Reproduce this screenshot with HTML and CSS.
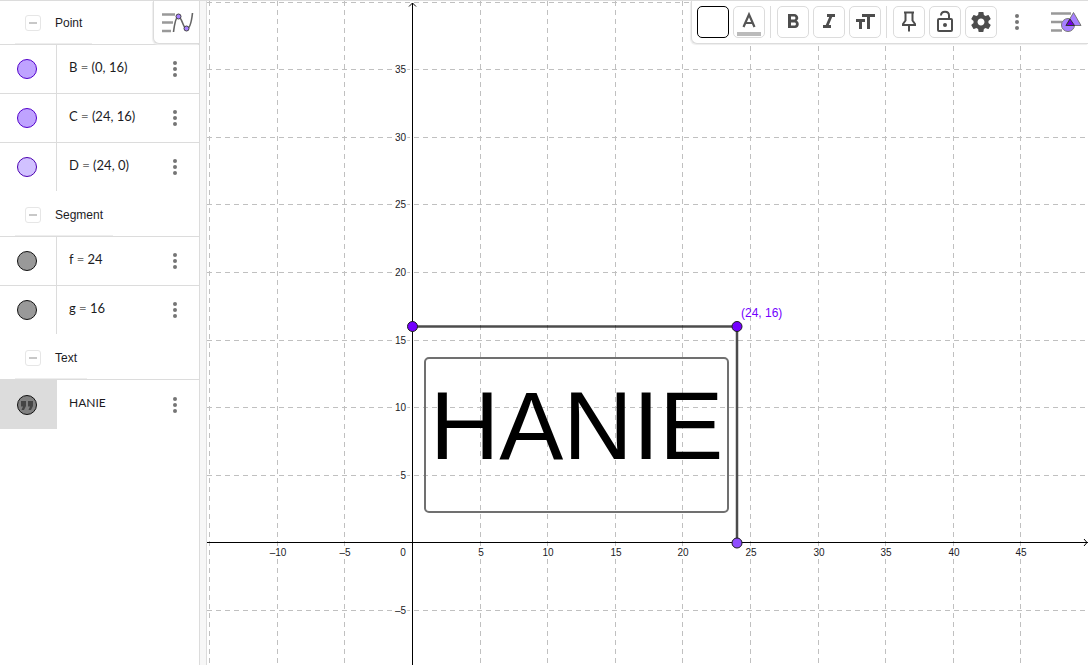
FILE: index.html
```html
<!DOCTYPE html>
<html lang="en">
<head>
<meta charset="utf-8">
<title>GeoGebra Classic</title>
<link rel="stylesheet" href="styles.css">
</head>
<body>
<svg class="defs" aria-hidden="true">
  <symbol id="dots" viewBox="0 0 24 24"><circle cx="12" cy="6" r="2"/><circle cx="12" cy="12" r="2"/><circle cx="12" cy="18" r="2"/></symbol>
</svg>
<div class="app">
  <aside class="algebra">
    <button class="algebra-style" aria-label="Algebra style bar">
      <svg width="32" height="24" viewBox="0 0 32 24"><path d="M0 4.500h13M0 12.500h11M0 21h9" stroke="#999" stroke-width="2.500"/><path d="M11.500 22C12.500 14 14 6.500 16.500 6.500C19.500 6.500 21.500 19 24.500 19C28 19 29.500 12 30.500 3" fill="none" stroke="#666" stroke-width="1.600"/><circle cx="16.500" cy="6.500" r="2.500" fill="#a67fff" stroke="#444"/><circle cx="24.500" cy="18.500" r="2.500" fill="#a67fff" stroke="#444"/></svg>
    </button>
    <section>
      <h2 class="group"><span class="group-label"><button class="collapse" aria-label="Collapse Point"></button>Point</span></h2>
      <ul class="rows">
        <li class="row"><span class="cell"><button class="marble point" aria-label="Show B"></button></span><span class="value">B <i>=</i> (0, 16)</span><button class="more" aria-label="More for B"><svg width="24" height="24"><use href="#dots"/></svg></button></li>
        <li class="row"><span class="cell"><button class="marble point" aria-label="Show C"></button></span><span class="value">C <i>=</i> (24, 16)</span><button class="more" aria-label="More for C"><svg width="24" height="24"><use href="#dots"/></svg></button></li>
        <li class="row"><span class="cell"><button class="marble point light" aria-label="Show D"></button></span><span class="value">D <i>=</i> (24, 0)</span><button class="more" aria-label="More for D"><svg width="24" height="24"><use href="#dots"/></svg></button></li>
      </ul>
    </section>
    <section>
      <h2 class="group"><span class="group-label"><button class="collapse" aria-label="Collapse Segment"></button>Segment</span></h2>
      <ul class="rows">
        <li class="row"><span class="cell"><button class="marble" aria-label="Show f"></button></span><span class="value">f <i>=</i> 24</span><button class="more" aria-label="More for f"><svg width="24" height="24"><use href="#dots"/></svg></button></li>
        <li class="row"><span class="cell"><button class="marble" aria-label="Show g"></button></span><span class="value">g <i>=</i> 16</span><button class="more" aria-label="More for g"><svg width="24" height="24"><use href="#dots"/></svg></button></li>
      </ul>
    </section>
    <section>
      <h2 class="group"><span class="group-label"><button class="collapse" aria-label="Collapse Text"></button>Text</span></h2>
      <ul class="rows">
        <li class="row selected"><span class="cell"><button class="marble quote" aria-label="Show text"><svg width="18" height="18" viewBox="0 0 18 18"><path d="M3 5h5v5l-2 4H3.500l1.500-3.500H3zM10 5h5v5l-2 4h-2.500l1.500-3.500H10z" fill="#444"/></svg></button></span><span class="value plain">HANIE</span><button class="more" aria-label="More for text"><svg width="24" height="24"><use href="#dots"/></svg></button></li>
      </ul>
    </section>
  </aside>
  <div class="splitter"></div>
  <main class="graphics">
    <svg class="plot" role="img" aria-label="Graphics view">
      <g transform="translate(-207 0)">
        <path class="grid" d="M209.500 1V2000M277.500 1V2000M344.500 1V2000M480.500 1V2000M547.500 1V2000M615.500 1V2000M682.500 1V2000M750.500 1V2000M818.500 1V2000M885.500 1V2000M953.500 1V2000M1020.500 1V2000"/>
        <path class="grid" d="M207 2.500H4000M207 69.500H4000M207 137.500H4000M207 204.500H4000M207 272.500H4000M207 340.500H4000M207 407.500H4000M207 475.500H4000M207 610.500H4000"/>
        <path class="axis" d="M412.500 3V2000M207 542.500H4000M409 6.500L412.500 3L416 6.500"/>
        <g class="ticks">
          <text x="278" y="556">–10</text><text x="345" y="556">–5</text><text x="403" y="556">0</text><text x="481" y="556">5</text><text x="548" y="556">10</text><text x="616" y="556">15</text><text x="683" y="556">20</text><text x="751" y="556">25</text><text x="819" y="556">30</text><text x="886" y="556">35</text><text x="954" y="556">40</text><text x="1021" y="556">45</text>
        </g>
        <g class="ticks side">
          <text x="406" y="73">35</text><text x="406" y="141">30</text><text x="406" y="208">25</text><text x="406" y="276">20</text><text x="406" y="344">15</text><text x="406" y="411">10</text><text x="406" y="479">5</text><text x="406" y="614">–5</text>
        </g>
        <path class="segment" d="M412.500 326.500H737V543"/>
        <rect class="text-frame" x="425" y="358" width="303" height="154" rx="4"/>
        <text class="big-text" x="430" y="459">HANIE</text>
        <circle class="dot" cx="412.500" cy="326.500" r="5"/>
        <circle class="dot" cx="737" cy="326.500" r="5"/>
        <circle class="dot pale" cx="737" cy="543" r="5"/>
        <text class="point-label" x="741" y="317">(24, 16)</text>
      </g>
      <svg x="100%" y="542" overflow="visible"><path class="axis" d="M-4 -3L-1 0.500L-4 4"/></svg>
    </svg>
    <div class="toolbar" role="toolbar">
      <button class="tool color" aria-label="Background colour"></button>
      <button class="tool" aria-label="Text colour"><svg width="24" height="28" viewBox="0 0 24 28"><path d="M6.500 19L12 6.500L17.500 19M8.500 15h7" fill="none" stroke="#555" stroke-width="2.200"/><path d="M0 24h24v4H0z" fill="#bbb"/></svg></button>
      <span class="divider"></span>
      <button class="tool" aria-label="Bold"><svg width="24" height="24" viewBox="0 0 24 24"><path fill="#4d4d4d" d="M15.600 10.790c.97-.67 1.650-1.770 1.650-2.790 0-2.260-1.750-4-4-4H7v14h7.040c2.090 0 3.710-1.700 3.710-3.790 0-1.520-.86-2.820-2.150-3.420zM10 6.500h3c.83 0 1.500.67 1.500 1.500s-.67 1.500-1.500 1.500h-3v-3zm3.500 9H10v-3h3.500c.83 0 1.500.67 1.500 1.500s-.67 1.500-1.500 1.500z"/></svg></button>
      <button class="tool" aria-label="Italic"><svg width="24" height="24" viewBox="0 0 24 24"><path fill="#4d4d4d" d="M10 4v3h2.210l-3.420 8H6v3h8v-3h-2.210l3.420-8H18V4z"/></svg></button>
      <button class="tool" aria-label="Text size"><svg width="24" height="24" viewBox="0 0 24 24"><path fill="#4d4d4d" d="M9 4v3h5v12h3V7h5V4H9zm-6 8h3v7h3v-7h3V9H3v3z"/></svg></button>
      <span class="divider"></span>
      <button class="tool" aria-label="Pin"><svg width="24" height="24" viewBox="0 0 24 24"><path d="M7 2.500h10M8.500 2.500v8L6 14v1h12v-1L15.500 10.500V2.500M12 15v6.500" fill="none" stroke="#4d4d4d" stroke-width="2"/></svg></button>
      <button class="tool" aria-label="Lock"><svg width="24" height="24" viewBox="0 0 24 24"><rect x="5" y="9" width="14" height="12" rx="1" fill="none" stroke="#4d4d4d" stroke-width="2"/><path d="M8 5.500C8 .5 16 .5 16 5.500v3" fill="none" stroke="#4d4d4d" stroke-width="2"/><circle cx="12" cy="15" r="2" fill="#4d4d4d"/></svg></button>
      <button class="tool" aria-label="Settings"><svg width="24" height="24" viewBox="0 0 24 24"><path fill="#4d4d4d" d="M19.430 12.980c.04-.32.070-.64.070-.98s-.03-.66-.07-.98l2.110-1.650c.19-.15.240-.42.120-.64l-2-3.460c-.12-.22-.39-.3-.61-.22l-2.490 1c-.52-.4-1.080-.73-1.690-.98l-.38-2.650C14.460 2.180 14.250 2 14 2h-4c-.25 0-.46.18-.49.420l-.38 2.650c-.61.250-1.170.590-1.690.980l-2.490-1c-.23-.09-.49 0-.61.220l-2 3.460c-.13.220-.07.490.120.640l2.110 1.650c-.04.320-.07.650-.07.980s.03.660.070.980l-2.110 1.650c-.19.150-.24.420-.12.640l2 3.460c.12.220.390.300.610.220l2.490-1c.52.400 1.080.730 1.690.980l.38 2.650c.03.240.240.420.490.420h4c.25 0 .46-.18.490-.42l.38-2.650c.61-.25 1.170-.59 1.690-.98l2.490 1c.23.090.49 0 .61-.22l2-3.460c.12-.22.070-.49-.12-.64l-2.110-1.650zM12 15.500c-1.930 0-3.500-1.570-3.500-3.500s1.570-3.500 3.500-3.500 3.500 1.570 3.500 3.500-1.570 3.500-3.500 3.500z"/></svg></button>
      <button class="more" aria-label="More options"><svg width="24" height="24"><use href="#dots"/></svg></button>
      <button class="view-style" aria-label="Graphics style bar"><svg width="32" height="24" viewBox="0 0 32 24"><path d="M0 3.500h20M0 12h11M0 20.500h11" stroke="#999" stroke-width="2.500"/><circle cx="17" cy="15" r="6.500" fill="#a67fff" stroke="#777"/><path d="M22.500 2.500L30 15.500H15z" fill="#a67fff" stroke="#777"/><path d="M19 9L23.500 15.500H15z" fill="#6f00e6" stroke="#333"/></svg></button>
    </div>
  </main>
</div>
</body>
</html>
```
FILE: styles.css
```css
* { box-sizing: border-box; }
body { margin: 0; background: #fff; color: #1c1c1f; font: 12px/16px "Liberation Sans", Arial, sans-serif; }
button { padding: 0; border: 0; background: none; }
svg { display: block; }
.defs { position: absolute; width: 0; height: 0; }
.app { position: relative; display: flex; height: 100vh; overflow: hidden; }
.app::before { content: ""; position: absolute; left: 0; right: 0; top: 0; height: 1px; background: #dcdcdc; }

.algebra { position: relative; flex: 0 0 200px; border-right: 1px solid #dcdcdc; }
.algebra-style { position: absolute; z-index: 1; top: 1px; right: 0; width: 46px; height: 43px; padding: 0 5px 1px 8px; background: #fff; border-left: 1px solid #dcdcdc; border-bottom: 1px solid #dcdcdc; border-bottom-left-radius: 6px; box-shadow: -1px 1px 1px #eee; }
.group { display: flex; height: 45px; margin: 0; padding-left: 15px; border-bottom: 1px solid #dcdcdc; font-size: 12px; font-weight: 400; }
.group-label { display: flex; align-items: center; padding: 2px 10px 0; border-bottom: 1px solid #eee; }
.collapse { display: grid; place-items: center; width: 16px; height: 16px; margin-right: 14px; border: 1px solid #e6e6e6; border-radius: 3px; }
.collapse::before { content: ""; width: 8px; height: 2px; background: #c8c8c8; }
.rows { margin: 0; padding: 0; list-style: none; }
.row { display: flex; align-items: center; height: 49px; border-bottom: 1px solid #dcdcdc; }
.row:last-child { border-bottom-color: transparent; }
.cell { display: flex; align-items: center; align-self: stretch; width: 57px; padding-left: 17px; border-right: 1px solid #dcdcdc; }
.marble { display: grid; place-items: center; width: 20px; height: 20px; border: 1px solid #111; border-radius: 50%; background: #999; }
.point { border-color: #5200cc; background: #bfa3ff; }
.light { border-color: #4b00b0; background: #d1c1ff; }
.quote { background: #808080; }
.selected { border: 0; }
.selected .cell { background: #dcdcdc; }
.value { flex: 1; padding: 0 0 4px 12px; font: 13px/16px Lato, "Open Sans", sans-serif; }
.value i { font-style: normal; color: #777; }
.plain { font-size: 12px; }
.more { width: 24px; height: 24px; fill: #757575; }
.row .more { margin-right: 12px; }

.splitter { flex: 0 0 7px; background: #f7f7f7; border-right: 1px solid #dcdcdc; }
.graphics { position: relative; flex: 1; min-width: 0; }
.plot { width: 100%; height: 100%; }
.grid { fill: none; stroke: #c0c0c0; stroke-dasharray: 5 4; }
.axis { fill: none; stroke: #000; }
.ticks { font-size: 10px; fill: #1c1c1f; text-anchor: middle; paint-order: stroke; stroke: #fff; stroke-width: 3px; }
.side { text-anchor: end; }
.segment { fill: none; stroke: #000; stroke-opacity: .7; stroke-width: 2.5px; }
.text-frame { fill: none; stroke: #707070; stroke-width: 2px; }
.big-text { font-size: 96px; fill: #000; }
.dot { fill: #7300ff; stroke: #1c1c1f; }
.pale { fill: #8f4dff; }
.point-label { font-size: 12px; fill: #7300ff; }

.toolbar { position: absolute; top: 1px; right: 0; display: flex; align-items: center; gap: 4px; height: 43px; padding: 0 5px; background: #fff; border-left: 1px solid #dcdcdc; border-bottom: 1px solid #dcdcdc; border-bottom-left-radius: 6px; box-shadow: -1px 1px 1px #eee; }
.tool { display: grid; place-items: center; width: 32px; height: 32px; border: 1px solid #dcdcdc; border-radius: 5px; }
.color { border-color: #000; }
.divider { width: 1px; height: 32px; margin: 0 2px 0 1px; background: #dcdcdc; }
.view-style { margin-left: 18px; }
.toolbar .more { margin-left: 4px; }
```
